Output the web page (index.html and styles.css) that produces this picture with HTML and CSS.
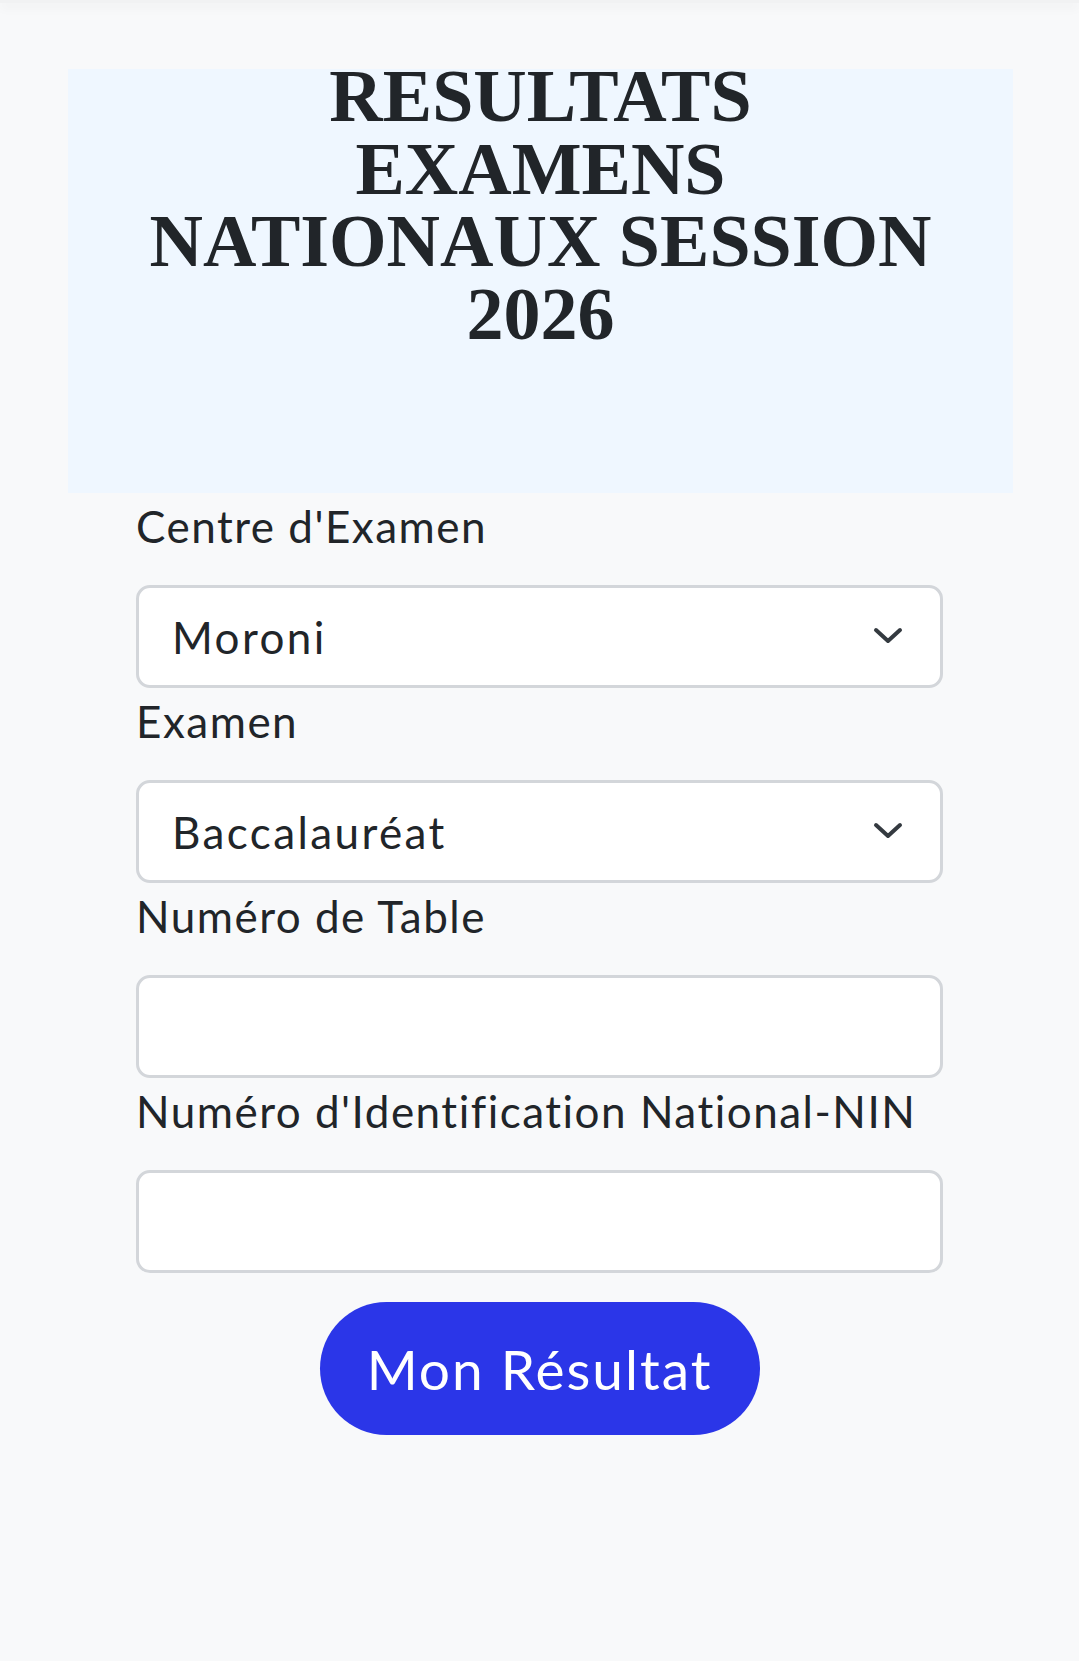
FILE: index.html
```html
<!DOCTYPE html>
<html lang="fr">
<head>
<meta charset="utf-8">
<title>Résultats Examens Nationaux</title>
<link rel="stylesheet" href="styles.css">
</head>
<body>
<div class="topbar"></div>
<section class="hero">
  <h1 class="hero-title">RESULTATS EXAMENS NATIONAUX SESSION 2026</h1>
</section>
<form class="form">
  <label class="label" for="centre">Centre d'Examen</label>
  <div class="select-wrap">
    <select id="centre" class="field select"><option>Moroni</option></select>
    <svg class="chevron" viewBox="0 0 30 18" width="30" height="18"><path d="M3 3 L15 14 L27 3" fill="none" stroke="#343a40" stroke-width="4" stroke-linecap="round" stroke-linejoin="round"/></svg>
  </div>
  <label class="label" for="examen">Examen</label>
  <div class="select-wrap">
    <select id="examen" class="field select"><option>Baccalauréat</option></select>
    <svg class="chevron" viewBox="0 0 30 18" width="30" height="18"><path d="M3 3 L15 14 L27 3" fill="none" stroke="#343a40" stroke-width="4" stroke-linecap="round" stroke-linejoin="round"/></svg>
  </div>
  <label class="label" for="table">Numéro de Table</label>
  <input id="table" class="field" type="text">
  <label class="label" for="nin">Numéro d'Identification National-NIN</label>
  <input id="nin" class="field" type="text">
  <div class="actions">
    <button type="button" class="btn">Mon Résultat</button>
  </div>
</form>
</body>
</html>
```
FILE: styles.css
```css
* { box-sizing: border-box; }
html, body { margin: 0; padding: 0; }
body {
  background: #f8f9fa;
  color: #212529;
  font-family: "Lato", "Noto Sans", sans-serif;
  min-height: 1661px;
}
.topbar {
  height: 3px;
  background: #f1f2f3;
  box-shadow: 0 3px 12px rgba(0, 0, 0, 0.09);
}
.hero {
  display: flex;
  flex-direction: column;
  margin: 66px 66px 0 68px;
  height: 424px;
  background: #eff7ff;
}
.hero-title {
  margin: -9px 0 0 0;
  padding: 0 80px;
  font-family: "Liberation Serif", "Times New Roman", serif;
  font-weight: 700;
  font-size: 74px;
  line-height: 72.7px;
  text-align: center;
  color: #212529;
}
.form {
  width: 807px;
  margin: 0 auto;
  display: flex;
  flex-direction: column;
}
.label {
  display: block;
  font-size: 44px;
  line-height: 66px;
  letter-spacing: 1.5px;
  margin-bottom: 26px;
  color: #212529;
}
.field {
  display: block;
  width: 100%;
  height: 103px;
  border: 3px solid #d3d6da;
  border-radius: 14px;
  background: #fff;
  padding: 0 80px 0 33px;
  font-family: inherit;
  font-size: 44px;
  letter-spacing: 2.4px;
  color: #212529;
  outline: none;
}
.select {
  appearance: none;
  -webkit-appearance: none;
}
.select-wrap { position: relative; }
.chevron {
  position: absolute;
  right: 40px;
  top: 42px;
  pointer-events: none;
}
.actions {
  display: flex;
  justify-content: center;
  margin-top: 29px;
}
.btn {
  width: 440px;
  height: 133px;
  border: none;
  border-radius: 67px;
  background: #2b36e8;
  color: #fff;
  font-family: inherit;
  font-size: 55px;
  letter-spacing: 2px;
  cursor: pointer;
}
```
